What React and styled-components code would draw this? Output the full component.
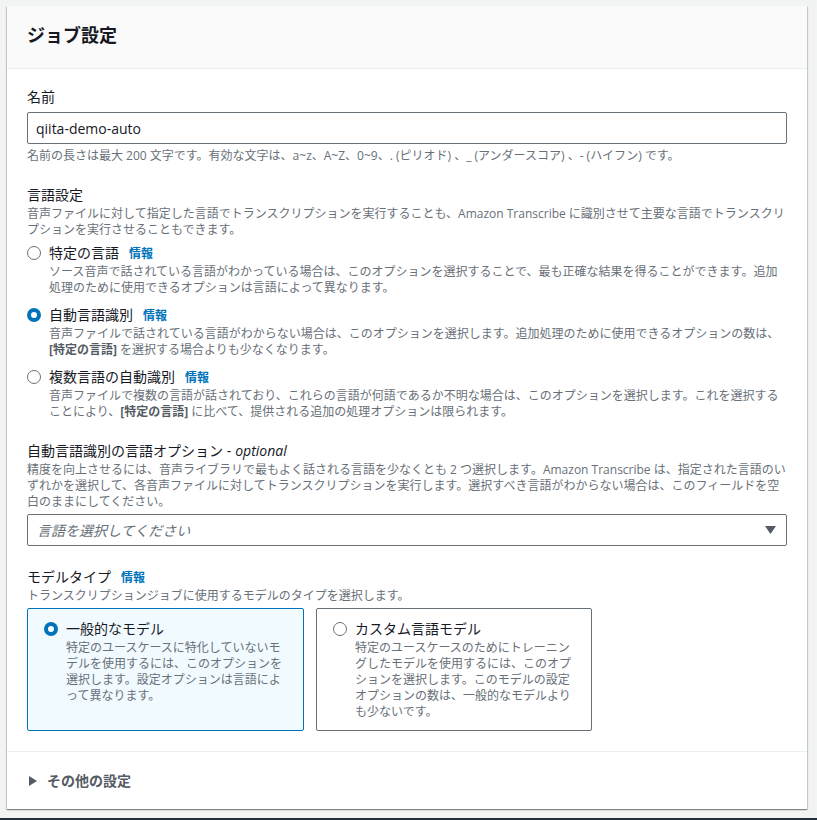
import React from "react";
import styled, { createGlobalStyle } from "styled-components";

const GlobalStyle = createGlobalStyle`
  html, body { margin: 0; padding: 0; background: #f2f3f3; }
  body {
    font-family: "Open Sans", "Noto Sans CJK JP", sans-serif;
    color: #16191f;
    -webkit-font-smoothing: antialiased;
  }
  * { box-sizing: border-box; }
`;

const Page = styled.div`
  padding: 6px 10px 9px 7px;
  background: #f2f3f3;
`;

const Card = styled.section`
  background: #ffffff;
  box-shadow: 0 1px 1px 0 rgba(0, 28, 36, 0.3),
    1px 1px 1px 0 rgba(0, 28, 36, 0.15),
    -1px 1px 1px 0 rgba(0, 28, 36, 0.15);
`;

const Header = styled.header`
  background: #fafafa;
  border-bottom: 1px solid #eaeded;
  padding: 18px 20px 22px;
`;

const Title = styled.h2`
  margin: 0;
  font-size: 18px;
  line-height: 22px;
  font-weight: 700;
  color: #16191f;
`;

const Body = styled.div`
  padding: 17px 20px 20px;
  display: flex;
  flex-direction: column;
  gap: 20px;
  border-bottom: 1px solid #eaeded;
`;

const Field = styled.div`
  display: flex;
  flex-direction: column;
`;

const Label = styled.div`
  font-size: 14px;
  line-height: 22px;
  height: 22px;
  color: #16191f;
  white-space: nowrap;
`;

const Optional = styled.i`
  font-style: italic;
  margin-left: 4px;
  line-height: 22px;
`;

const Info = styled.a`
  font-size: 12px;
  line-height: 22px;
  font-weight: 700;
  color: #0073bb;
  margin-left: 10px;
  text-decoration: none;
`;

const Desc = styled.div`
  font-size: 12px;
  line-height: 16px;
  color: #687078;
`;

const Strong = styled.span`
  font-weight: 700;
  color: #545b64;
  line-height: 16px;
`;

const Hint = styled(Desc)`
  margin-top: 4px;
`;

const Input = styled.div`
  margin-top: 4px;
  height: 32px;
  border: 1px solid #687078;
  border-radius: 2px;
  padding: 0 9px 0 8px;
  display: flex;
  align-items: center;
  font-size: 14px;
  color: #16191f;
`;

const Select = styled(Input)`
  justify-content: space-between;
  padding-right: 10px;
`;

const Placeholder = styled.span`
  font-style: italic;
  color: #687078;
  margin-left: 1px;
`;

const RadioGroup = styled.div`
  display: flex;
  flex-direction: column;
  gap: 8px;
  margin-top: 4px;
`;

const RadioRow = styled.div`
  display: grid;
  grid-template-columns: 14px 1fr;
  column-gap: 8px;
`;

const RadioCircle = styled.span`
  width: 14px;
  height: 14px;
  border-radius: 50%;
  margin-top: 4px;
  box-sizing: border-box;
  border: ${(p) => (p.$checked ? "4px solid #0073bb" : "1.5px solid #687078")};
  background: #ffffff;
`;

const RadioText = styled.div`
  display: flex;
  flex-direction: column;
`;

const Tiles = styled.div`
  display: grid;
  grid-template-columns: 277px 276px;
  column-gap: 12px;
  margin-top: 4px;
`;

const Tile = styled.div`
  border: 1px solid ${(p) => (p.$checked ? "#0073bb" : "#687078")};
  background: ${(p) => (p.$checked ? "#f1faff" : "#ffffff")};
  border-radius: 2px;
  padding: 9px 16px 11px;
  height: 123px;
`;

const Expander = styled.div`
  padding: 18px 20px 17px 22px;
  display: flex;
  align-items: center;
  gap: 10px;
  font-size: 14px;
  line-height: 22px;
  font-weight: 700;
  color: #545b64;
`;

const BottomBar = styled.div`
  height: 30px;
  background: #232f3e;
`;

const Caret = () => (
  <svg width="8" height="10" viewBox="0 0 8 10">
    <path d="M0 0 L8 5 L0 10 Z" fill="#545b64" />
  </svg>
);

const Down = () => (
  <svg width="11" height="8" viewBox="0 0 11 8">
    <path d="M0 0 H11 L5.5 8 Z" fill="#545b64" />
  </svg>
);

const RadioOption = ({ checked, label, info, children }) => (
  <RadioRow>
    <RadioCircle $checked={checked} />
    <RadioText>
      <Label>
        {label}
        {info && <Info>情報</Info>}
      </Label>
      <Desc>{children}</Desc>
    </RadioText>
  </RadioRow>
);

export default function App() {
  return (
    <>
      <GlobalStyle />
      <Page>
        <Card>
          <Header>
            <Title>ジョブ設定</Title>
          </Header>
          <Body>
            <Field>
              <Label>名前</Label>
              <Input>qiita-demo-auto</Input>
              <Hint>
                名前の長さは最大 200 文字です。有効な文字は、a~z、A~Z、0~9、. (ピリオド) 、_ (アンダースコア) 、- (ハイフン) です。
              </Hint>
            </Field>

            <Field>
              <Label>言語設定</Label>
              <Desc>
                音声ファイルに対して指定した言語でトランスクリプションを実行することも、Amazon Transcribe に識別させて主要な言語でトランスクリプションを実行させることもできます。
              </Desc>
              <RadioGroup>
                <RadioOption label="特定の言語" info>
                  ソース音声で話されている言語がわかっている場合は、このオプションを選択することで、最も正確な結果を得ることができます。追加処理のために使用できるオプションは言語によって異なります。
                </RadioOption>
                <RadioOption label="自動言語識別" info checked>
                  音声ファイルで話されている言語がわからない場合は、このオプションを選択します。追加処理のために使用できるオプションの数は、
                  <br />
                  <Strong>[特定の言語]</Strong> を選択する場合よりも少なくなります。
                </RadioOption>
                <RadioOption label="複数言語の自動識別" info>
                  音声ファイルで複数の言語が話されており、これらの言語が何語であるか不明な場合は、このオプションを選択します。これを選択することにより、<Strong>[特定の言語]</Strong> に比べて、提供される追加の処理オプションは限られます。
                </RadioOption>
              </RadioGroup>
            </Field>

            <Field>
              <Label>
                自動言語識別の言語オプション -<Optional>optional</Optional>
              </Label>
              <Desc>
                精度を向上させるには、音声ライブラリで最もよく話される言語を少なくとも 2 つ選択します。Amazon Transcribe は、指定された言語のいずれかを選択して、各音声ファイルに対してトランスクリプションを実行します。選択すべき言語がわからない場合は、このフィールドを空白のままにしてください。
              </Desc>
              <Select>
                <Placeholder>言語を選択してください</Placeholder>
                <Down />
              </Select>
            </Field>

            <Field>
              <Label>
                モデルタイプ<Info>情報</Info>
              </Label>
              <Desc>トランスクリプションジョブに使用するモデルのタイプを選択します。</Desc>
              <Tiles>
                <Tile $checked>
                  <RadioOption label="一般的なモデル" checked>
                    特定のユースケースに特化していないモデルを使用するには、このオプションを選択します。設定オプションは言語によって異なります。
                  </RadioOption>
                </Tile>
                <Tile>
                  <RadioOption label="カスタム言語モデル">
                    特定のユースケースのためにトレーニングしたモデルを使用するには、このオプションを選択します。このモデルの設定オプションの数は、一般的なモデルよりも少ないです。
                  </RadioOption>
                </Tile>
              </Tiles>
            </Field>
          </Body>
          <Expander>
            <Caret />
            その他の設定
          </Expander>
        </Card>
      </Page>
      <BottomBar />
    </>
  );
}
